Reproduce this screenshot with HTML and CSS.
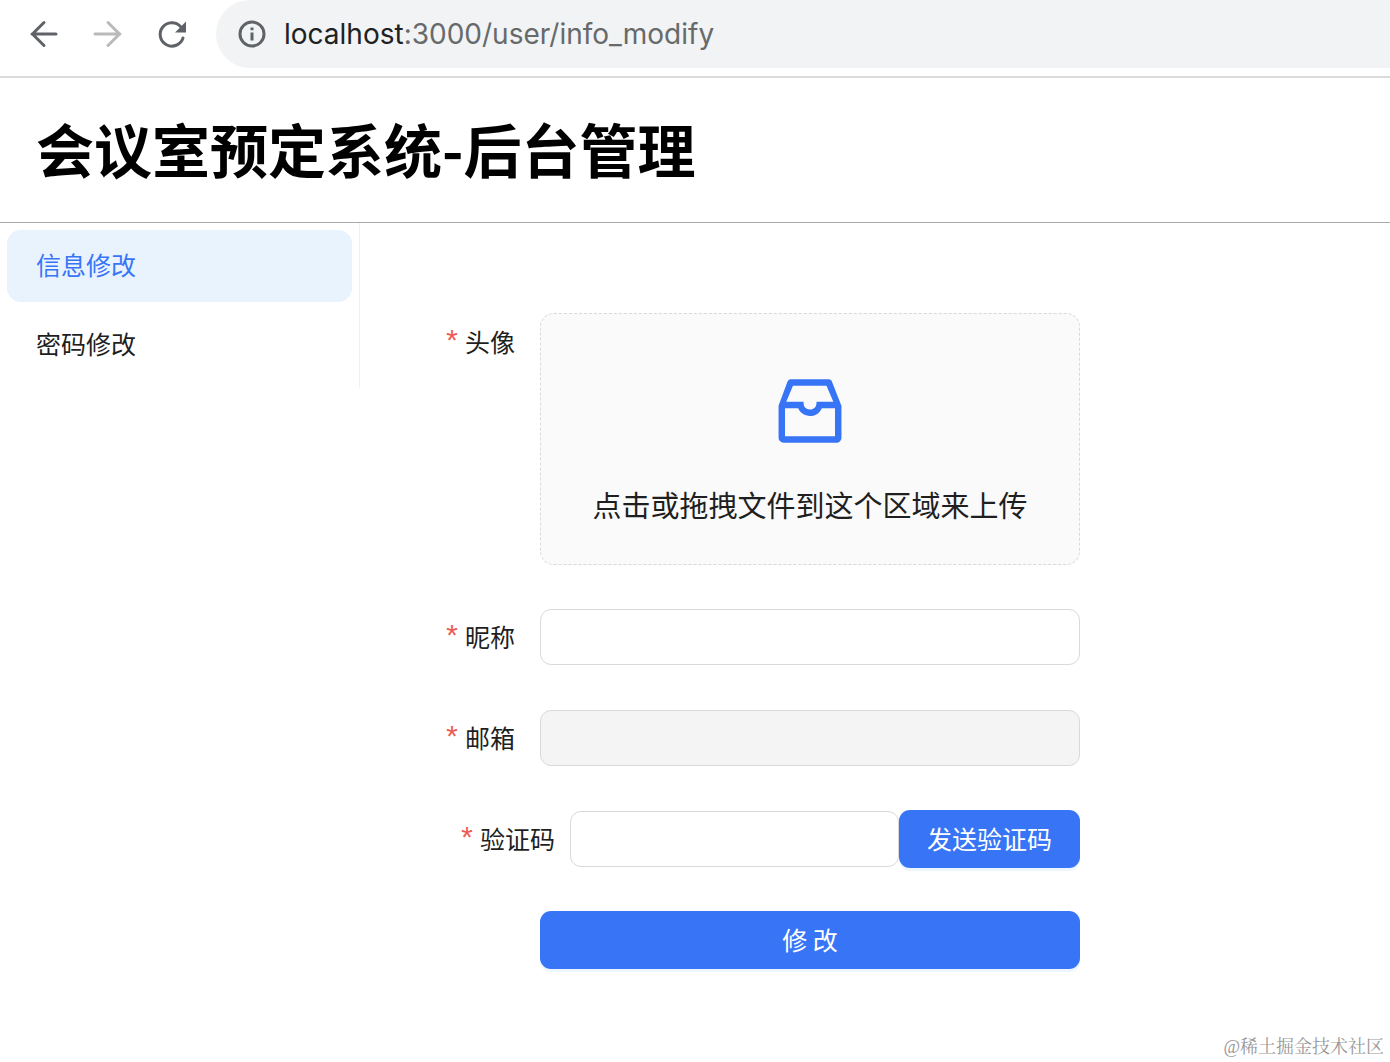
FILE: index.html
```html
<!DOCTYPE html>
<html lang="zh-CN">
  <head>
    <meta charset="UTF-8" />
    <meta name="viewport" content="width=device-width, initial-scale=1.0" />
    <title>会议室预定系统-后台管理</title>
    <link rel="stylesheet" href="styles.css">
  </head>
  <body>
    <div class="toolbar">
      <button class="nav-btn" type="button" aria-label="后退">
        <svg width="32" height="32" viewBox="0 0 32 32"><path d="M28 16H4M16 4.500L4.500 16L16 27.500" /></svg>
      </button>
      <button class="nav-btn nav-off" type="button" aria-label="前进" disabled>
        <svg width="32" height="32" viewBox="0 0 32 32"><path d="M3 16H28M16 4.500L27.500 16L16 27.500" /></svg>
      </button>
      <button class="nav-btn" type="button" aria-label="刷新">
        <svg width="32" height="32" viewBox="0 0 32 32">
          <path d="M27 20A11.700 11.700 0 1 1 24.500 8.500" />
          <path class="solid" d="M30 3.500V14.500H19Z" />
        </svg>
      </button>
      <div class="address">
        <svg class="info" width="28" height="28" viewBox="0 0 28 28">
          <circle cx="14" cy="14" r="12" />
          <path d="M14 12.500V20.500M14 7.500V10.300" />
        </svg>
        <div class="url">localhost<span>:3000/user/info_modify</span></div>
      </div>
    </div>

    <header class="header">
      <h1>会议室预定系统-后台管理</h1>
    </header>

    <div class="main">
      <nav class="menu">
        <a class="active" href="#info">信息修改</a>
        <a href="#password">密码修改</a>
      </nav>

      <form class="form" action="">
        <div class="row">
          <label class="name" for="headPic">头像</label>
          <label class="upload" for="headPic">
            <svg width="86" height="86" viewBox="0 0 1024 1024">
              <path d="M885.200 446.300l-.2-.8-112.200-285.100c-5-16.100-19.900-27.200-36.800-27.200H281.200c-17 0-32.100 11.300-36.900 27.600L139.400 443l-.3.700-.2.800c-1.300 4.900-1.700 9.900-1 14.800-.1 1.600-.2 3.200-.2 4.800V830a60.900 60.900 0 0 0 60.800 60.800h627.200c33.500 0 60.800-27.300 60.900-60.800V464.100c0-1.300 0-2.600-.1-3.700.4-4.900 0-9.600-1.300-14.100zm-295.800-43l-.3 15.700c-.8 44.900-31.800 75.100-77.100 75.100-22.100 0-41.100-7.100-54.800-20.600S436 441.200 435.600 419l-.3-15.700H229.500L309 210h399.200l81.700 193.300H589.400zm-375 76.800h157.300c24.300 57.100 76 90.800 140.400 90.800 33.700 0 65-9.400 90.300-27.200 22.200-15.600 39.500-37.400 50.700-63.600h156.500V814H214.400V480.100z" />
            </svg>
            <span>点击或拖拽文件到这个区域来上传</span>
            <input id="headPic" type="file" name="headPic" />
          </label>
        </div>
        <div class="row">
          <label class="name" for="nickName">昵称</label>
          <input class="text" id="nickName" type="text" name="nickName" />
        </div>
        <div class="row">
          <label class="name" for="email">邮箱</label>
          <input class="text" id="email" type="email" name="email" disabled />
        </div>
        <div class="row captcha">
          <label class="name" for="captcha">验证码</label>
          <input class="text" id="captcha" type="text" name="captcha" />
          <button class="btn" type="button">发送验证码</button>
        </div>
        <div class="row submit">
          <button class="btn" type="submit">修 改</button>
        </div>
      </form>
    </div>

    <div class="watermark">@稀土掘金技术社区</div>
  </body>
</html>
```
FILE: styles.css
```css
* {
  box-sizing: border-box;
  padding: 0;
  margin: 0;
}
body {
  position: relative;
  min-height: 100vh;
  background: #fff;
  color: #1f1f1f;
  font-family: "Noto Sans CJK SC", sans-serif;
  font-size: 25px;
}
button,
input {
  font: inherit;
}

/* browser bar */
.toolbar {
  display: flex;
  gap: 32px;
  height: 78px;
  padding-left: 28px;
  border-bottom: 2px solid #dadcdc;
}
.nav-btn {
  display: flex;
  align-items: center;
  width: 32px;
  height: 68px;
  border: none;
  background: none;
}
.nav-btn path {
  fill: none;
  stroke: #5f6368;
  stroke-width: 3;
  stroke-linecap: round;
}
.nav-off path {
  stroke: #bababa;
}
.nav-btn .solid {
  fill: #5f6368;
  stroke: none;
}
.address {
  flex: 1;
  display: flex;
  align-items: center;
  gap: 18px;
  height: 68px;
  margin-left: -4px;
  padding-left: 22px;
  border-radius: 34px 0 0 34px;
  background: #f1f3f4;
}
.info {
  fill: none;
  stroke: #5f6368;
  stroke-width: 3;
}
.url {
  color: #202124;
  font-family: Inter, sans-serif;
  font-size: 28px;
}
.url span {
  color: #67696b;
}

.header {
  padding: 26px 36px 30px;
  border-bottom: 1px solid #aaa;
}
.header h1 {
  color: #000;
  font-size: 58px;
  line-height: 88px;
}

.main {
  display: flex;
  align-items: flex-start;
}
.menu {
  display: flex;
  flex-direction: column;
  gap: 7px;
  width: 360px;
  padding: 7px;
  border-right: 1px solid #f0f0f0;
}
.menu a {
  padding: 0 29px 4px;
  border-radius: 14px;
  color: #1f1f1f;
  line-height: 68px;
  text-decoration: none;
}
.menu .active {
  background: #e8f3fe;
  color: #3875f6;
}

.form {
  display: flex;
  flex-direction: column;
  gap: 43px;
  width: 720px;
  margin-top: 90px;
}
.row {
  display: flex;
  align-items: center;
}
.row:first-child {
  align-items: flex-start;
}
.name {
  width: 180px;
  padding: 0 25px 2px 0;
  line-height: 56px;
  text-align: right;
}
.name::before {
  content: "*";
  margin-right: 4px;
  color: #ec5b56;
  font-family: "Liberation Mono", monospace;
  font-size: 30px;
  line-height: 1;
}
.upload {
  flex: 1;
  display: flex;
  flex-direction: column;
  align-items: center;
  gap: 28px;
  padding: 54px 0 38px;
  border: 1px dashed #d9d9d9;
  border-radius: 14px;
  background: #fafafa;
  cursor: pointer;
}
.upload svg {
  fill: #3875f6;
}
.upload span {
  font-size: 29px;
  line-height: 44px;
}
.upload input {
  display: none;
}
.text {
  flex: 1;
  min-width: 0;
  height: 56px;
  padding: 0 20px;
  border: 1px solid #d9d9d9;
  border-radius: 11px;
  background: #fff;
}
.text:disabled {
  background: #f4f4f4;
}
.captcha .name {
  width: 210px;
  padding-right: 15px;
}
.btn {
  height: 58px;
  padding: 0 28px 2px;
  border: none;
  border-radius: 11px;
  background: #3875f6;
  box-shadow: 0 3px 0 #edf5ff;
  color: #fff;
  line-height: 56px;
  cursor: pointer;
}
.submit {
  padding-left: 180px;
}
.submit .btn {
  flex: 1;
}

.watermark {
  position: absolute;
  right: 6px;
  bottom: 2px;
  color: #999;
  font-family: "Liberation Serif", "Noto Serif CJK SC", "Noto Sans CJK SC", serif;
  font-size: 18px;
  line-height: 26px;
}
```
